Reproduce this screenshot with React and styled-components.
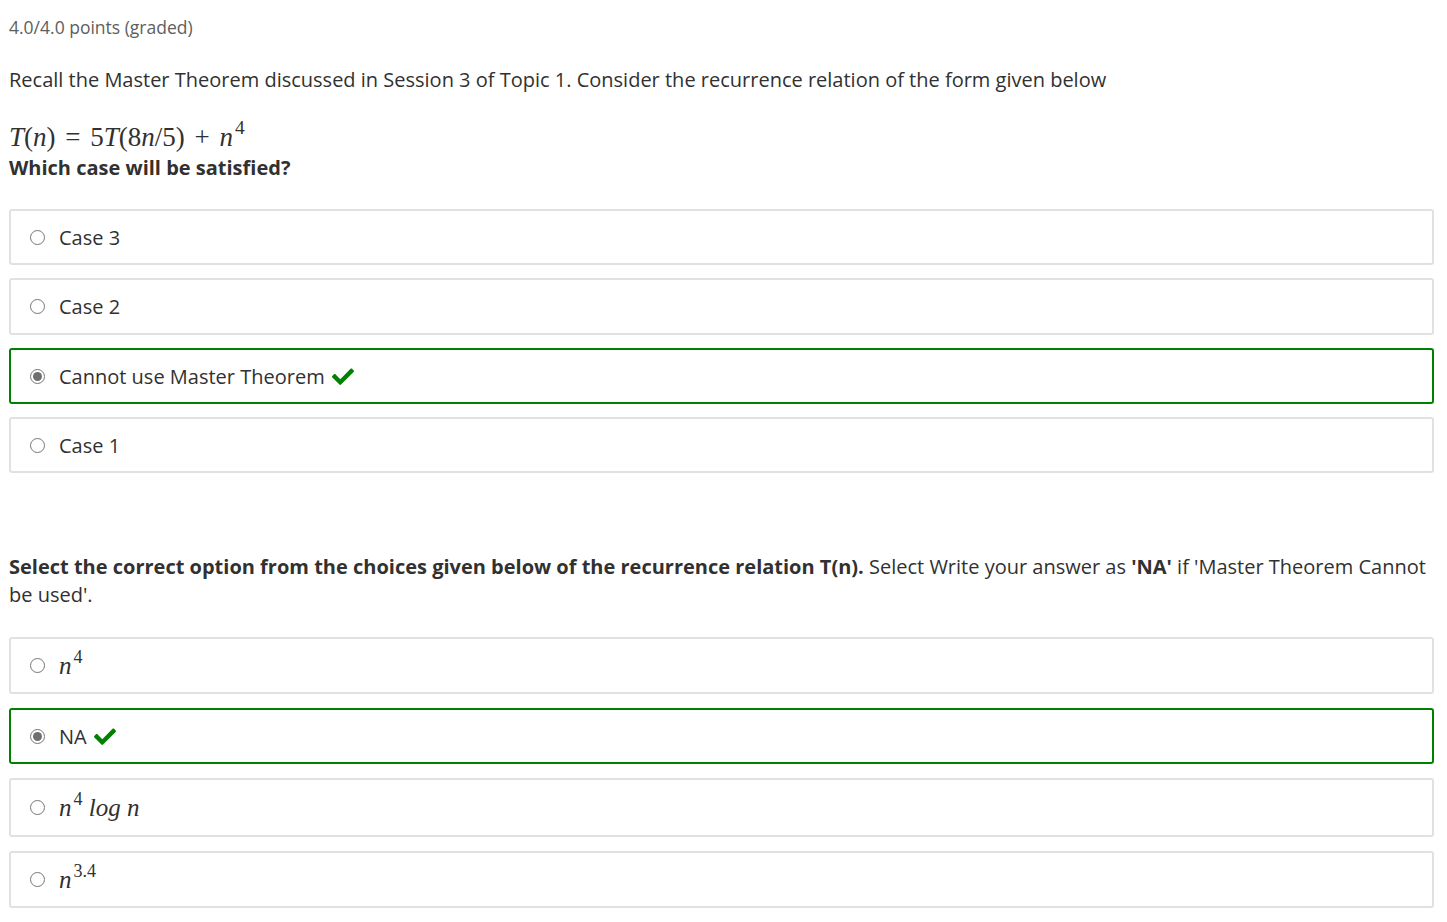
import styled, { createGlobalStyle } from "styled-components";

const GlobalStyle = createGlobalStyle`
  body {
    margin: 0;
    background: #fff;
    font-family: "Open Sans", "Liberation Sans", sans-serif;
    color: #313131;
  }
`;

const Container = styled.div`
  padding: 14px 13px 0 9px;
`;
const Points = styled.div`
  font-size: 17.5px;
  color: #5e5e5e;
  line-height: 26px;
`;
const Problem = styled.div`
  font-size: 20px;
  line-height: 28px;
  margin-top: 26px;
`;
const Math = styled.span`
  font-family: "Liberation Serif", "DejaVu Serif", serif;
  font-size: ${(p) => p.$size || 27}px;
  font-style: italic;
  white-space: nowrap;
`;
const Up = styled.span`
  font-style: normal;
`;
const Op = styled.span`
  font-style: normal;
  margin: 0 0.36em;
`;
const Sup = styled.sup`
  font-size: 0.72em;
  font-style: normal;
  vertical-align: 0.6em;
  line-height: 0;
  margin-left: 2px;
`;
const Equation = styled.div`
  margin-top: 29px;
  line-height: 29px;
`;
const Question = styled.div`
  font-weight: 700;
  font-size: 20px;
  line-height: 26px;
`;
const Choices = styled.div`
  display: flex;
  flex-direction: column;
  gap: ${(p) => p.$gap || 13}px;
  margin-top: ${(p) => p.$top || 30}px;
`;
const Choice = styled.label`
  display: flex;
  align-items: center;
  gap: 14px;
  height: ${(p) => p.$h || 56}px;
  box-sizing: border-box;
  padding: 0 18px 0 19px;
  border: 2px solid ${(p) => (p.$correct ? "#008100" : "#e1e1e1")};
  border-radius: 3px;
  font-size: 20px;
  color: #313131;
`;
const Radio = styled.span`
  width: 15px;
  height: 15px;
  box-sizing: border-box;
  border-radius: 50%;
  border: 1px solid #767676;
  display: flex;
  align-items: center;
  justify-content: center;
  flex-shrink: 0;
  &::after {
    content: "";
    display: ${(p) => (p.$checked ? "block" : "none")};
    width: 9px;
    height: 9px;
    border-radius: 50%;
    background: #6f6f6f;
  }
`;
const Label = styled.span`
  display: flex;
  align-items: center;
  gap: 7px;
`;
const Prompt = styled.p`
  margin: 80px 0 0;
  font-size: 20px;
  line-height: 28px;
`;

const Check = () => (
  <svg width="22" height="18" viewBox="0 0 512 420" aria-hidden="true">
    <path
      fill="#008100"
      d="M173.9 409.9 7.5 243.5c-10-10-10-26.2 0-36.2l36.2-36.2c10-10 26.2-10 36.2 0L192 283.2 432.1 43.1c10-10 26.2-10 36.2 0l36.2 36.2c10 10 10 26.2 0 36.2L210.1 409.9c-10 10-26.2 10-36.2 0z"
    />
  </svg>
);

const Option = ({ checked, correct, h, children }) => (
  <Choice $correct={correct} $h={h}>
    <Radio $checked={checked} />
    <Label>
      {children}
      {correct && <Check />}
    </Label>
  </Choice>
);

const App = () => {
  return (
    <Container>
      <GlobalStyle />
      <Points>4.0/4.0 points (graded)</Points>
      <Problem>
        Recall the Master Theorem discussed in Session 3 of Topic 1. Consider the recurrence relation of the form given below
      </Problem>
      <Equation>
        <Math>
          T<Up>(</Up>n<Up>)</Up>
          <Op>=</Op>
          <Up>5</Up>T<Up>(8</Up>n<Up>/5)</Up>
          <Op>+</Op>n<Sup>4</Sup>
        </Math>
      </Equation>
      <Question>Which case will be satisfied?</Question>
      <Choices $top={28}>
        <Option>Case 3</Option>
        <Option h={57}>Case 2</Option>
        <Option checked correct>Cannot use Master Theorem</Option>
        <Option>Case 1</Option>
      </Choices>
      <Prompt>
        <b>Select the correct option from the choices given below of the recurrence relation T(n).</b> Select Write your answer as{" "}
        <b>'NA'</b> if 'Master Theorem Cannot be used'.
      </Prompt>
      <Choices $top={28} $gap={14}>
        <Option h={57}>
          <Math $size={25}>
            n<Sup>4</Sup>
          </Math>
        </Option>
        <Option checked correct h={56}>NA</Option>
        <Option h={59}>
          <Math $size={25}>
            n<Sup>4</Sup> log n
          </Math>
        </Option>
        <Option h={57}>
          <Math $size={25}>
            n<Sup>3.4</Sup>
          </Math>
        </Option>
      </Choices>
    </Container>
  );
};

export default App;
